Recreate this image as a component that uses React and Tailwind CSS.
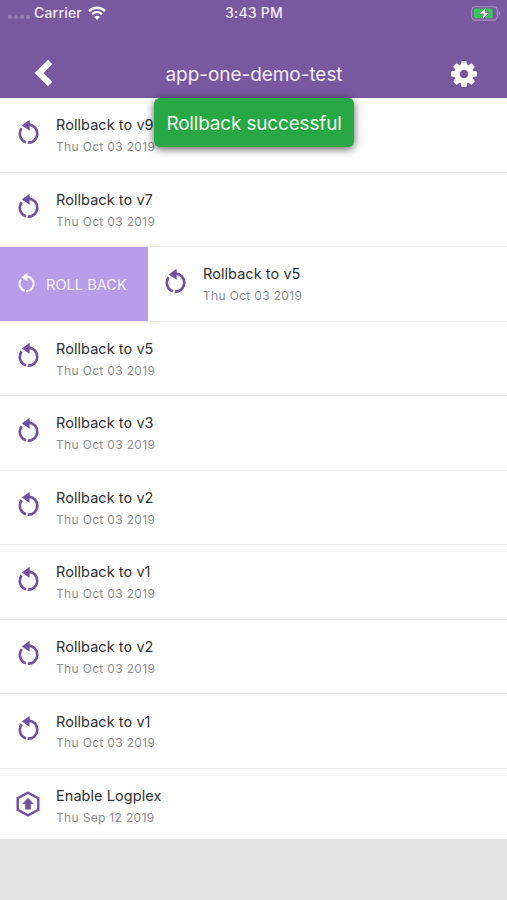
import React from "react";

const releases = [
  { id: 1, title: "Rollback to v9", date: "Thu Oct 03 2019" },
  { id: 2, title: "Rollback to v7", date: "Thu Oct 03 2019" },
  { id: 3, title: "Rollback to v5", date: "Thu Oct 03 2019", swiped: true },
  { id: 4, title: "Rollback to v5", date: "Thu Oct 03 2019" },
  { id: 5, title: "Rollback to v3", date: "Thu Oct 03 2019" },
  { id: 6, title: "Rollback to v2", date: "Thu Oct 03 2019" },
  { id: 7, title: "Rollback to v1", date: "Thu Oct 03 2019" },
  { id: 8, title: "Rollback to v2", date: "Thu Oct 03 2019" },
  { id: 9, title: "Rollback to v1", date: "Thu Oct 03 2019" },
  { id: 10, title: "Enable Logplex", date: "Thu Sep 12 2019", type: "deploy" },
];

const RollbackIcon = ({ className }) => (
  <svg viewBox="0 0 22 26" className={className} fill="none" stroke="currentColor">
    <path d="M3.7 9.2A9 9 0 0 0 7.9 23.2" strokeWidth="2.7" />
    <path d="M9.8 23.7A9 9 0 0 0 10.8 5.7" strokeWidth="2.7" />
    <path d="M3.8 6.6L11.6 .8V11.8Z" fill="currentColor" stroke="none" />
  </svg>
);

const DeployIcon = ({ className }) => (
  <svg viewBox="0 0 24 26" className={className} fill="none" stroke="currentColor">
    <path d="M12 1.7L22.3 7.3V18.7L12 24.3L1.7 18.7V7.3Z" strokeWidth="2.4" />
    <path d="M12 7L17.8 12.8H14.8V18.6H9.2V12.8H6.2Z" fill="currentColor" stroke="none" />
  </svg>
);

const CogIcon = ({ className }) => (
  <svg viewBox="0 128 1536 1536" className={className} fill="currentColor">
    <path d="M1024 896q0-106-75-181t-181-75-181 75-75 181 75 181 181 75 181-75 75-181zm512-109v222q0 12-8 23t-20 13l-185 28q-19 54-39 91 35 50 107 138 10 12 10 25t-9 23q-27 37-99 108t-94 71q-12 0-26-9l-138-108q-44 23-91 38-16 136-29 186-7 28-36 28h-222q-14 0-24.5-8.5t-11.5-21.5l-28-184q-49-16-90-37l-141 107q-10 9-25 9-14 0-25-11-126-114-165-168-7-10-7-23 0-12 8-23 15-21 51-66.5t54-70.5q-27-50-41-99l-183-27q-13-2-21-12.5t-8-23.5v-222q0-12 8-23t19-13l186-28q14-46 39-92-40-57-107-138-10-12-10-24 0-10 9-23 26-36 98.5-107.5t94.5-71.5q13 0 26 10l138 107q44-23 91-38 16-136 29-186 7-28 36-28h222q14 0 24.5 8.5t11.5 21.5l28 184q49 16 90 37l142-107q9-9 24-9 13 0 25 10 129 119 165 170 7 8 7 22 0 12-8 23-15 21-51 66.5t-54 70.5q26 50 41 98l183 28q13 2 21 12.5t8 23.5z" />
  </svg>
);

const StatusBar = () => (
  <div className="grid h-[26px] grid-cols-3 items-center pl-2 pr-[6px] text-[14px] font-medium leading-none text-[#f3ebfa]">
    <div className="flex items-center">
      <div className="mr-[4px] mt-[8px] flex gap-[2px]">
        <span className="h-[4px] w-[4px] rounded-full bg-[#9d82b8]" />
        <span className="h-[4px] w-[4px] rounded-full bg-[#9d82b8]" />
        <span className="h-[4px] w-[4px] rounded-full bg-[#9d82b8]" />
        <span className="h-[4px] w-[4px] rounded-full bg-[#9d82b8]" />
      </div>
      <span className="tracking-[0.2px]">Carrier</span>
      <svg viewBox="0 0 18 14" className="ml-[6px] h-[14px] w-[18px] text-white" fill="none" stroke="currentColor">
        <path d="M1 5.1C5.6 .6 12.4 .6 17 5.1" strokeWidth="2.3" />
        <path d="M4 8.2C7 5.4 11 5.4 14 8.2" strokeWidth="2.2" />
        <path d="M9 14L6.1 11C7.7 9.4 10.3 9.4 11.9 11Z" fill="currentColor" stroke="none" />
      </svg>
    </div>
    <span className="pr-[1px] text-center tracking-[0.25px]">3:43 PM</span>
    <svg viewBox="0 0 30 15" className="h-[15px] w-[30px] justify-self-end">
      <rect x="0.7" y="0.7" width="25.6" height="13.4" rx="3.6" fill="none" stroke="#aa93c2" strokeWidth="1.1" />
      <path d="M27.8 5.1C29.8 6 29.8 8.8 27.8 9.7Z" fill="#aa93c2" />
      <rect x="2.7" y="2.5" width="19" height="9.8" rx="2" fill="#35c759" />
      <path d="M15.1 1.2L8.2 8.1H12.4L11.2 13.6L18.3 6.5H14.1Z" fill="#fff" stroke="#7a5a9e" strokeWidth="0.8" />
    </svg>
  </div>
);

const Header = () => (
  <header className="flex h-[98px] flex-col bg-[#79589f]">
    <StatusBar />
    <div className="flex h-[72px] items-center justify-between pl-[34px] pr-[30px] pt-[23px] text-white">
      <svg viewBox="0 0 19 28" className="mb-[2px] h-[28px] w-[19px]" fill="none" stroke="currentColor">
        <path d="M16.2 3L5 14L16.2 25" strokeWidth="6" />
      </svg>
      <h1 className="pl-[4px] pt-[2px] text-[19px] leading-6 tracking-[-0.05px] text-[#f3ebfa]">
        app-one-demo-test
      </h1>
      <CogIcon className="h-[26px] w-[26px]" />
    </div>
  </header>
);

const ReleaseRow = ({ release }) => {
  const Icon = release.type === "deploy" ? DeployIcon : RollbackIcon;

  return (
    <li className="flex h-[74.55px] shrink-0 border-b border-[#ececec]">
      {release.swiped && (
        <button className="-mr-px flex w-[148px] shrink-0 items-center bg-[#b69ce9] pl-[18px] pt-[2px] text-[14.5px] tracking-[0.05px] text-[#f7f0ff]">
          <RollbackIcon className="mb-[5px] mr-[10px] h-[21px] w-[18px] shrink-0" />
          ROLL BACK
        </button>
      )}
      <div className="flex pl-[16px]">
        <div className="flex w-[24px] justify-end pt-[20.5px]">
          <Icon className={release.type === "deploy" ? "mt-[1.5px] h-[26px] w-[24px] text-[#7350a0]" : "h-[26px] w-[22px] text-[#7350a0]"} />
        </div>
        <div className="pl-[16px] pt-[17.2px]">
          <p className="text-[14.5px] leading-5 tracking-[0.06px] text-[#303030]">{release.title}</p>
          <p className="mt-[1.8px] text-[12px] leading-5 tracking-[0.33px] text-[#8e8e8e]">{release.date}</p>
        </div>
      </div>
    </li>
  );
};

const Toast = ({ message }) => (
  <div className="absolute left-[154px] top-[98px] flex h-[49px] w-[200px] items-center justify-center whitespace-nowrap rounded-[6px] bg-[#28a745] pt-[3px] text-[19px] tracking-[-0.18px] text-[#effff0] shadow-[0_2px_9px_rgba(0,0,0,0.65)]">
    {message}
  </div>
);

const App = () => {
  return (
    <div className="relative h-[900px] w-full overflow-hidden bg-[#e3e3e3] font-['Inter',sans-serif]">
      <Header />
      <ul className="flex h-[741px] flex-col overflow-hidden bg-white">
        {releases.map((release) => (
          <ReleaseRow key={release.id} release={release} />
        ))}
      </ul>
      <Toast message="Rollback successful" />
    </div>
  );
};

export default App;
